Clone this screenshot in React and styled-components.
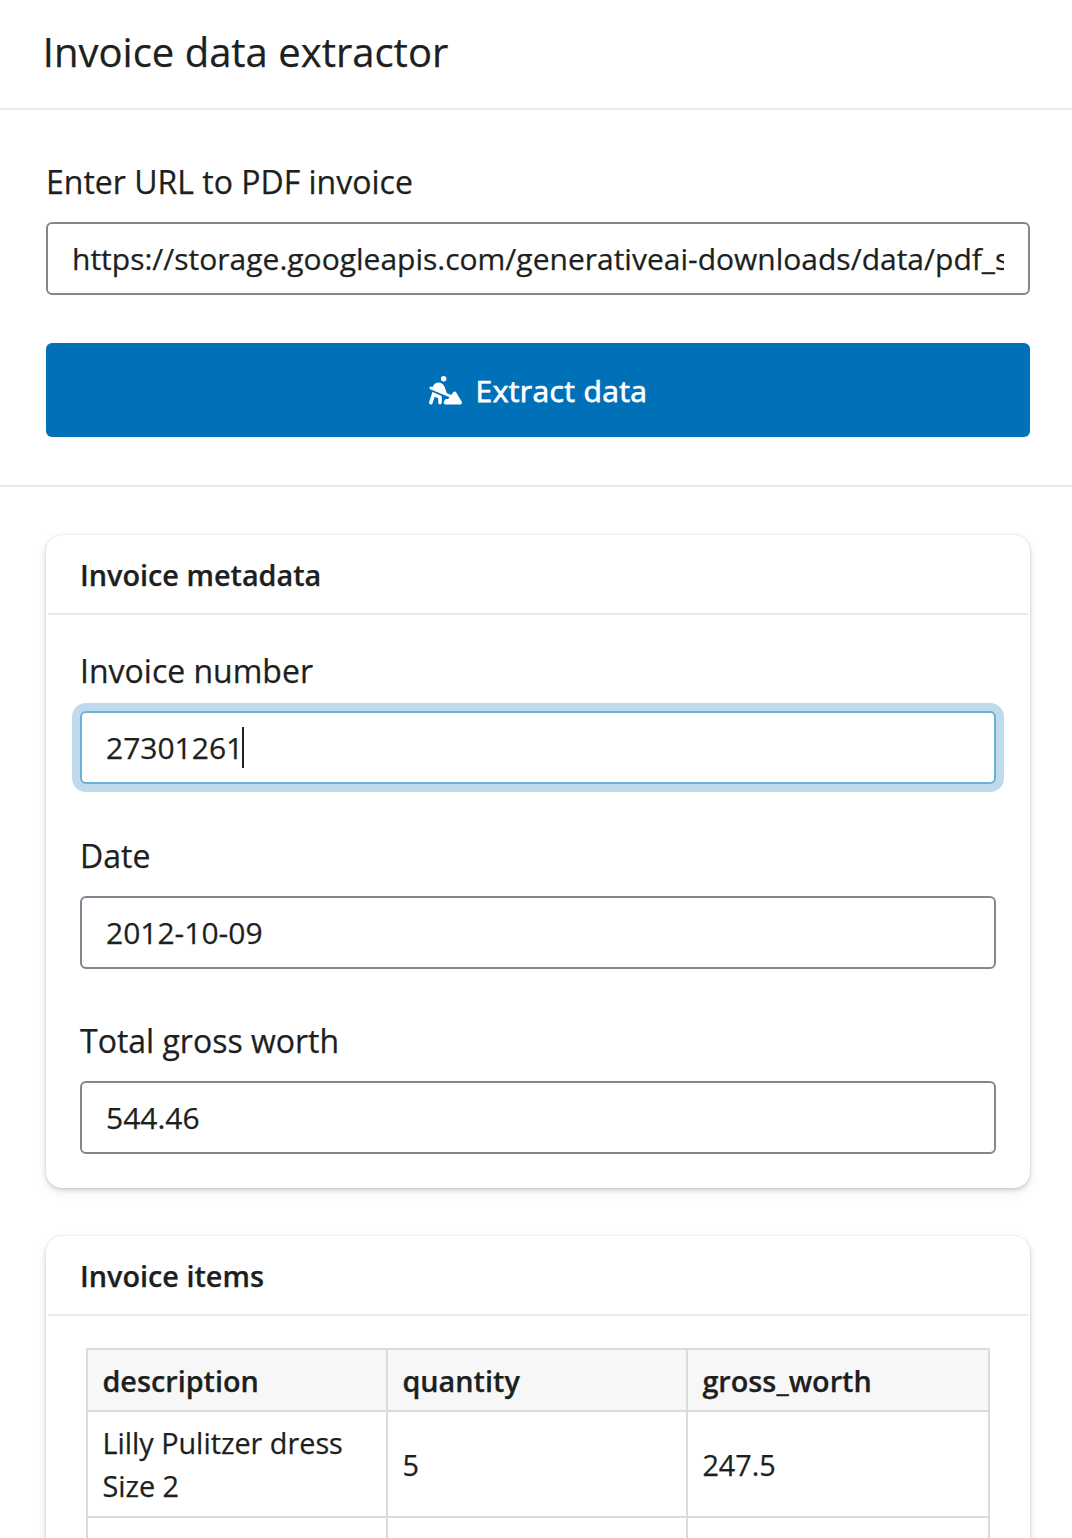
import React from "react";
import styled, { createGlobalStyle, css } from "styled-components";
import { FaPersonDigging } from "react-icons/fa6";

const GlobalStyle = createGlobalStyle`
  * { box-sizing: border-box; }
  html, body { margin: 0; background: #ffffff; }
  body {
    height: 1538px;
    overflow: hidden;
    color: #1d1f21;
    font-family: "Open Sans", "Noto Sans", sans-serif;
    font-size: 32px;
    line-height: 1.5;
    -webkit-text-stroke: 0.25px currentColor;
  }
`;

const Page = styled.div`
  height: 1538px;
  overflow: hidden;
`;

const Header = styled.header`
  height: 110px;
  padding: 22px 42.8px 0;
  border-bottom: 2px solid #e6eaed;
`;

const Title = styled.h1`
  margin: 0;
  font-size: 40px;
  font-weight: 400;
  line-height: 60px;
`;

const FormSection = styled.section`
  height: 377px;
  padding: 48px 42px 0 46px;
  border-bottom: 2px solid #e6eaed;
`;

const Results = styled.main`
  display: flex;
  flex-direction: column;
  gap: 48px;
  padding: 48px 42px 0 46px;
`;

const Field = styled.div`
  display: flex;
  flex-direction: column;
  gap: 16px;
`;

const Label = styled.label`
  font-size: 32px;
  line-height: 48px;
`;

const Control = styled.div`
  display: flex;
  align-items: center;
  height: 73px;
  padding: 0 24px;
  border: 2px solid #7f8891;
  border-radius: 6px;
  background: #ffffff;
  font-size: 30px;
  line-height: 45px;
  ${(p) =>
    p.$focused &&
    css`
      border-color: #6bb0d9;
      box-shadow: 0 0 0 8px #bfdaed;
    `}
`;

const Value = styled.span`
  overflow: hidden;
  white-space: nowrap;
`;

const Caret = styled.span`
  width: 2px;
  height: 41px;
  margin-left: -1px;
  background: #1d1f21;
`;

const ExtractButton = styled.button`
  display: flex;
  align-items: center;
  justify-content: center;
  gap: 14px;
  width: 100%;
  height: 94px;
  margin-top: 48px;
  padding: 0;
  border: 0;
  border-radius: 6px;
  background: #0070b9;
  color: #ffffff;
  font: 400 30px/45px "Open Sans", "Noto Sans", sans-serif;
  letter-spacing: 0.38px;
  -webkit-text-stroke: 0.75px #ffffff;

  svg {
    width: 33px;
    height: 29.5px;
    stroke-width: 0;
  }
`;

const Card = styled.section`
  border: 2px solid #ffffff;
  border-radius: 16px;
  background: #ffffff;
  box-shadow: 0 2px 4px rgba(0, 0, 0, 0.14), 0 4px 12px rgba(0, 0, 0, 0.08),
    0 0 2px rgba(0, 0, 0, 0.1);
`;

const CardHeader = styled.h2`
  height: 78px;
  margin: 0;
  padding: 16px 32px 0;
  border-bottom: 2px solid #e6eaed;
  font-size: 28.8px;
  font-weight: 600;
  line-height: 43px;
`;

const CardFields = styled.div`
  display: flex;
  flex-direction: column;
  gap: 48px;
  padding: 32px 32px 32px;
`;

const CardTable = styled.div`
  padding: 32px 38px;
`;

const Table = styled.table`
  width: 904px;
  border-collapse: collapse;
  table-layout: fixed;
  font-size: 28.8px;
  line-height: 43px;
`;

const cell = css`
  height: ${(p) => p.$height || 62}px;
  padding: 0 14.4px;
  border: 2px solid #d7dce0;
  text-align: left;
  vertical-align: middle;
`;

const HeadCell = styled.th`
  ${cell}
  background: #f7f7f7;
  font-weight: 600;
`;

const Cell = styled.td`
  ${cell}
`;

const columns = ["description", "quantity", "gross_worth"];

const rows = [
  { description: "Lilly Pulitzer dress Size 2", quantity: "5", gross_worth: "247.5" },
  { description: "", quantity: "", gross_worth: "" },
];

function TextField({ label, value, focused }) {
  return (
    <Field>
      <Label>{label}</Label>
      <Control $focused={focused}>
        <Value>{value}</Value>
        {focused && <Caret />}
      </Control>
    </Field>
  );
}

export default function App() {
  return (
    <Page>
      <GlobalStyle />
      <Header>
        <Title>Invoice data extractor</Title>
      </Header>
      <FormSection>
        <TextField
          label="Enter URL to PDF invoice"
          value="https://storage.googleapis.com/generativeai-downloads/data/pdf_s"
        />
        <ExtractButton type="button">
          <FaPersonDigging />
          Extract data
        </ExtractButton>
      </FormSection>
      <Results>
        <Card>
          <CardHeader>Invoice metadata</CardHeader>
          <CardFields>
            <TextField label="Invoice number" value="27301261" focused />
            <TextField label="Date" value="2012-10-09" />
            <TextField label="Total gross worth" value="544.46" />
          </CardFields>
        </Card>
        <Card>
          <CardHeader>Invoice items</CardHeader>
          <CardTable>
            <Table>
              <colgroup>
                <col style={{ width: 300 }} />
                <col style={{ width: 300 }} />
                <col />
              </colgroup>
              <thead>
                <tr>
                  {columns.map((name) => (
                    <HeadCell key={name}>{name}</HeadCell>
                  ))}
                </tr>
              </thead>
              <tbody>
                {rows.map((row, i) => (
                  <tr key={i}>
                    {columns.map((name) => (
                      <Cell key={name} $height={106}>
                        {row[name]}
                      </Cell>
                    ))}
                  </tr>
                ))}
              </tbody>
            </Table>
          </CardTable>
        </Card>
      </Results>
    </Page>
  );
}
